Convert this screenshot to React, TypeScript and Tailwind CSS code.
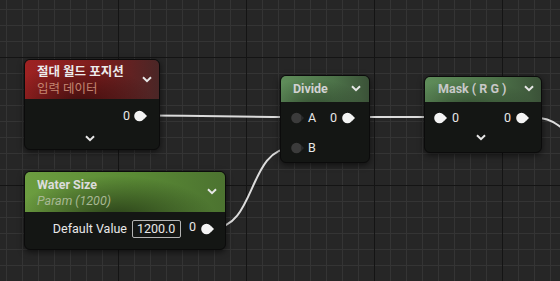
import React from "react";

const font = { fontFamily: "Roboto, 'Noto Sans CJK KR', 'Noto Sans', sans-serif" };

function Chevron({ className = "" }: { className?: string }) {
  return (
    <svg width="10" height="7" viewBox="0 0 10 7" className={className}>
      <path d="M1 1.2 L5 5.2 L9 1.2" fill="none" stroke="#e6e6e6" strokeWidth="2" />
    </svg>
  );
}

function Pin({ dark = false }: { dark?: boolean }) {
  const fill = dark ? "#3b3b3b" : "#f4f4f4";
  return (
    <svg width="14" height="12" viewBox="0 0 14 12" className="shrink-0">
      <circle cx="5.5" cy="6" r="5.3" fill={fill} />
      <polygon points="10,3 13,6 10,9" fill={dark ? "#2a2a2a" : "#f4f4f4"} />
    </svg>
  );
}

export default function App() {
  return (
    <div
      style={font}
      className="relative w-[560px] h-[281px] overflow-hidden bg-[#262626] bg-[image:linear-gradient(to_right,#141414_1px,transparent_1px),linear-gradient(to_bottom,#141414_1px,transparent_1px),linear-gradient(to_right,#343434_1px,transparent_1px),linear-gradient(to_bottom,#343434_1px,transparent_1px)] bg-[length:128px_128px,128px_128px,16px_16px,16px_16px] bg-[position:118px_57px,118px_57px,6px_9px,6px_9px]"
    >
      {/* wires */}
      <svg className="absolute inset-0" width="560" height="281">
        <g fill="none" stroke="#dcdcdc" strokeWidth="2">
          <path d="M147 115.5 C 220 115.5, 220 117, 291 117" />
          <path d="M352 117 L 437 117" />
          <path d="M524 117 C 545 117, 552 120, 562 128" />
          <path d="M213 228 C 256 228, 248 148, 292 148" />
        </g>
      </svg>

      {/* 절대 월드 포지션 */}
      <div className="absolute left-[24px] top-[59px] w-[136px] h-[91px] rounded-[6px] border border-[#0b0b0b] bg-[#141614] shadow-[0_2px_6px_rgba(0,0,0,0.6)] overflow-hidden">
        <div className="relative h-[39px] bg-[image:radial-gradient(ellipse_at_40%_110%,rgba(0,0,0,0.5),transparent_65%),linear-gradient(to_right,#9e2222,#7c1d1d_55%,#4a2626)] pl-[12px] pt-[3px]">
          <div className="text-[12.5px] font-bold text-[#ececec] leading-[18px]">절대 월드 포지션</div>
          <div className="text-[12.5px] text-[#c48672] leading-[16px]">입력 데이터</div>
          <Chevron className="absolute right-[7px] top-[16px]" />
        </div>
        <div className="flex flex-col">
          <div className="flex items-center justify-end gap-[4px] pr-[11px] pt-[8px] h-[26px]">
            <span className="text-[12.5px] text-[#e8e8e8]">0</span>
            <Pin />
          </div>
          <div className="flex justify-center pt-[10px] pr-[4px]">
            <Chevron />
          </div>
        </div>
      </div>

      {/* Divide */}
      <div className="absolute left-[280px] top-[75px] w-[90px] h-[88px] rounded-[6px] border border-[#0b0b0b] bg-[#141614] shadow-[0_2px_6px_rgba(0,0,0,0.6)] overflow-hidden">
        <div className="relative h-[26px] bg-[image:radial-gradient(ellipse_at_35%_120%,rgba(0,0,0,0.35),transparent_65%),linear-gradient(to_right,#5f8d5a,#4d7349_60%,#3b5238)] pl-[12px] flex items-center">
          <span className="text-[12.5px] font-bold text-[#d2d2d2]">Divide</span>
          <Chevron className="absolute right-[8px] top-[9px]" />
        </div>
        <div className="flex flex-col pl-[10px] pr-[13px] pt-[10px] gap-[18px]">
          <div className="flex items-center h-[12px]">
            <Pin dark />
            <span className="ml-[3px] text-[12.5px] text-[#e8e8e8]">A</span>
            <span className="ml-auto mr-[5px] text-[12.5px] text-[#e8e8e8]">0</span>
            <Pin />
          </div>
          <div className="flex items-center h-[12px]">
            <Pin dark />
            <span className="ml-[3px] text-[12.5px] text-[#e8e8e8]">B</span>
          </div>
        </div>
      </div>

      {/* Mask */}
      <div className="absolute left-[424px] top-[76px] w-[118px] h-[77px] rounded-[6px] border border-[#0b0b0b] bg-[#141614] shadow-[0_2px_6px_rgba(0,0,0,0.6)] overflow-hidden">
        <div className="relative h-[25px] bg-[image:radial-gradient(ellipse_at_35%_120%,rgba(0,0,0,0.35),transparent_65%),linear-gradient(to_right,#5f8d5a,#4d7349_60%,#3b5238)] pl-[13px] flex items-center">
          <span className="text-[12.5px] font-bold text-[#c8c8c8] whitespace-pre">Mask ( R G )</span>
          <Chevron className="absolute right-[7px] top-[8px]" />
        </div>
        <div className="flex items-center pl-[9px] pr-[11px] pt-[10px] h-[22px]">
          <Pin />
          <span className="ml-[4px] text-[12.5px] text-[#e8e8e8]">0</span>
          <span className="ml-auto mr-[5px] text-[12.5px] text-[#e8e8e8]">0</span>
          <Pin />
        </div>
        <div className="flex justify-center pt-[10px] pr-[4px]">
          <Chevron />
        </div>
      </div>

      {/* Water Size */}
      <div className="absolute left-[24px] top-[171px] w-[202px] h-[79px] rounded-[6px] border border-[#0b0b0b] bg-[#141614] shadow-[0_2px_6px_rgba(0,0,0,0.6)] overflow-hidden">
        <div className="relative h-[40px] bg-[image:radial-gradient(ellipse_at_45%_115%,rgba(0,0,0,0.55),transparent_65%),linear-gradient(to_right,#6c9d40,#5a8a35_55%,#4c7330)] pl-[12px] pt-[4px]">
          <div className="text-[12.5px] font-bold text-[#dcdcdc] leading-[17px]">Water Size</div>
          <div className="text-[12.5px] italic text-[#a8b894] leading-[16px]">Param (1200)</div>
          <Chevron className="absolute right-[8px] top-[16px]" />
        </div>
        <div className="flex items-center justify-end pr-[10px] pt-[8px]">
          <span className="text-[12.5px] text-[#e8e8e8] mr-[5px]">Default Value</span>
          <div className="h-[18px] w-[49px] px-[4px] border border-[#b4b4b4] rounded-[2px] flex items-center text-[12.5px] text-[#e8e8e8]">
            1200.0
          </div>
          <span className="ml-[8px] mr-[5px] text-[12.5px] text-[#e8e8e8] -mt-[4px]">0</span>
          <Pin />
        </div>
      </div>
    </div>
  );
}
